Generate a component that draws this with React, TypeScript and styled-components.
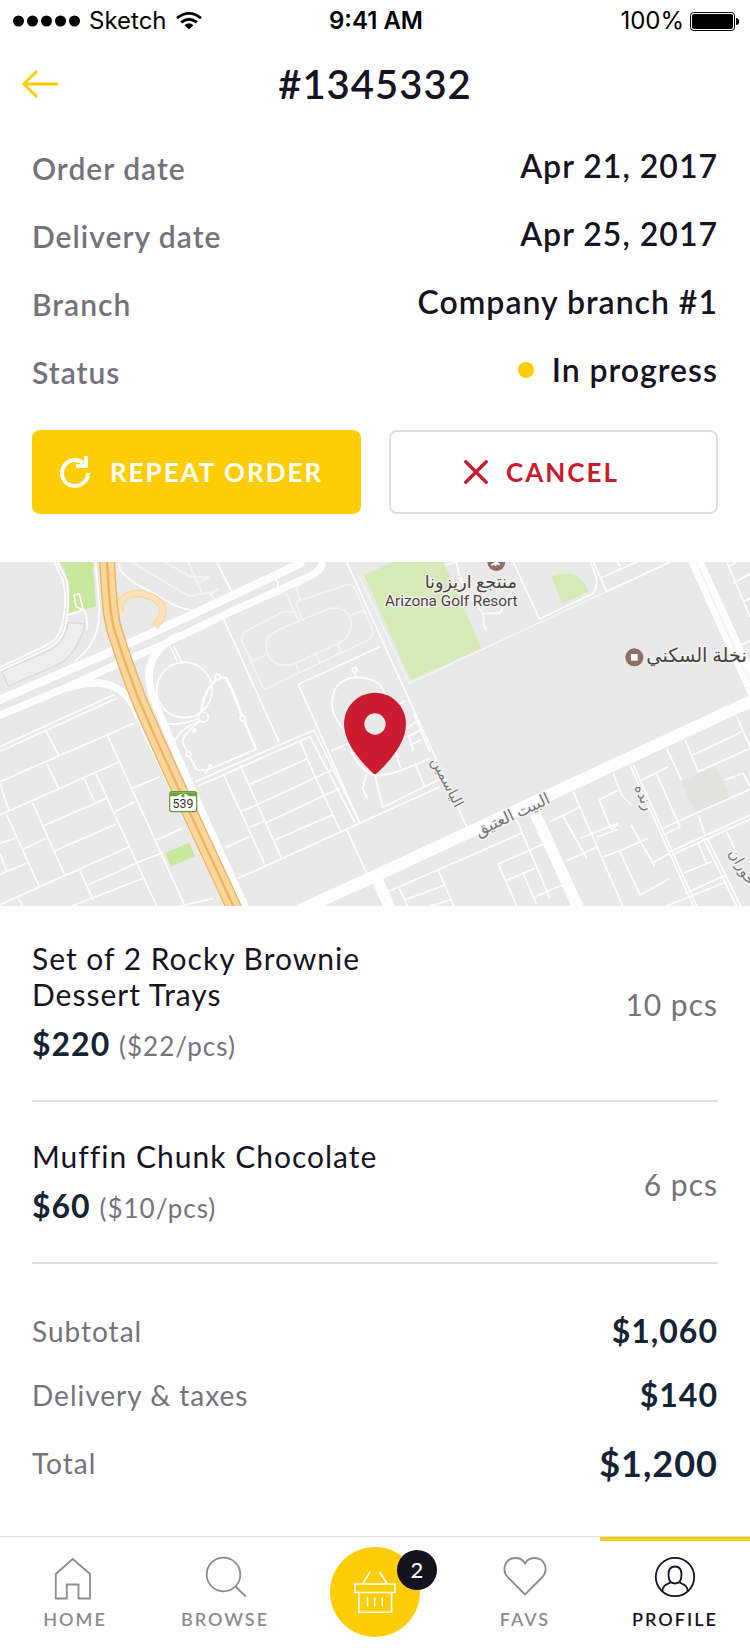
import React from 'react';
import styled, { createGlobalStyle } from 'styled-components';

const color = {
  ink: '#161323',
  price: '#152433',
  muted: '#74727c',
  tab: '#8c8b92',
  line: '#dedfe0',
  yellow: '#ffcd05',
  red: '#cb1b2f',
};

const GlobalStyle = createGlobalStyle`
  *, *::before, *::after { box-sizing: border-box; }
  body {
    margin: 0;
    background: #fff;
    color: ${color.ink};
    font-family: Lato, "Liberation Sans", sans-serif;
    letter-spacing: 1px;
  }
  h1, h2, p, dl, dd, ul { margin: 0; padding: 0; }
  ul { list-style: none; }
  svg { display: block; flex: none; overflow: visible; }
`;

const Screen = styled.div`
  min-height: 100vh;
  display: flex;
  flex-direction: column;
`;

const StatusBar = styled.div`
  display: grid;
  grid-template-columns: 1fr auto 1fr;
  align-items: center;
  height: 42px;
  padding: 0 11px 0 13px;
  color: #000;
  font: 400 24px/40px Inter, sans-serif;
  letter-spacing: 0;
`;

const StatusGroup = styled.div<{ $end?: boolean }>`
  display: flex;
  align-items: center;
  justify-content: ${(p) => (p.$end ? 'flex-end' : 'flex-start')};
  gap: ${(p) => (p.$end ? 6 : 9)}px;
`;

const Clock = styled.time`
  font-weight: 600;
`;

const Header = styled.header`
  display: grid;
  grid-template-columns: 1fr auto 1fr;
  align-items: center;
  height: 84px;
  padding: 0 22px;
`;

const BackButton = styled.button`
  justify-self: start;
  padding: 0;
  border: 0;
  background: none;
  color: ${color.yellow};
  cursor: pointer;
`;

const Title = styled.h1`
  font-size: 40px;
  line-height: 48px;
  font-weight: 600;
`;

const Details = styled.dl`
  display: flex;
  flex-direction: column;
  gap: 24px;
  padding: 20px 32px 0;
`;

const DetailRow = styled.div`
  display: flex;
  justify-content: space-between;
  align-items: flex-start;
`;

const DetailLabel = styled.dt`
  color: ${color.muted};
  font-size: 30px;
  line-height: 44px;
  font-weight: 600;
`;

const DetailValue = styled.dd`
  display: flex;
  align-items: center;
  gap: 18px;
  font-size: 32px;
  line-height: 40px;
  font-weight: 600;
`;

const StatusDot = styled.span`
  width: 16px;
  height: 16px;
  border-radius: 50%;
  background: ${color.yellow};
`;

const Actions = styled.div`
  display: grid;
  grid-template-columns: 1fr 1fr;
  gap: 28px;
  padding: 36px 32px 48px;
`;

const ActionButton = styled.button<{ $primary?: boolean }>`
  display: flex;
  align-items: center;
  justify-content: center;
  gap: ${(p) => (p.$primary ? 20 : 18)}px;
  height: 84px;
  padding: 0 ${(p) => (p.$primary ? 10 : 24)}px 0 0;
  border: 2px solid ${(p) => (p.$primary ? color.yellow : color.line)};
  border-radius: 8px;
  background: ${(p) => (p.$primary ? color.yellow : '#fff')};
  color: ${(p) => (p.$primary ? '#fff' : color.red)};
  font: 700 26px/32px Lato, sans-serif;
  letter-spacing: 2px;
  cursor: pointer;
`;

const MapPanel = styled.section`
  height: 344px;
  overflow: hidden;
  background: #e9e9e9;
  svg { width: 100%; height: 100%; }
`;

const ItemList = styled.ul`
  padding: 0 32px;
`;

const Item = styled.li`
  display: flex;
  align-items: center;
  justify-content: space-between;
  padding: 36px 0;
  border-bottom: 2px solid ${color.line};
  &:first-child { padding-top: 34px; }
`;

const ItemName = styled.h2`
  max-width: 360px;
  font-size: 30px;
  line-height: 36px;
  font-weight: 400;
`;

const ItemPrice = styled.p`
  margin-top: 12px;
  color: ${color.price};
  font-size: 32px;
  line-height: 40px;
  font-weight: 700;
`;

const UnitPrice = styled.span`
  color: ${color.muted};
  font-size: 26px;
  line-height: 26px;
  font-weight: 400;
`;

const Quantity = styled.p`
  padding-top: 4px;
  color: ${color.muted};
  font-size: 30px;
  line-height: 36px;
`;

const Totals = styled.dl`
  display: flex;
  flex-direction: column;
  gap: 24px;
  padding: 47px 32px 49px;
`;

const TotalRow = styled.div<{ $grand?: boolean }>`
  display: flex;
  align-items: center;
  justify-content: space-between;
  line-height: ${(p) => (p.$grand ? 48 : 40)}px;
  dt { color: ${color.muted}; font-size: 28px; }
  dd {
    color: ${color.price};
    font-size: ${(p) => (p.$grand ? 36 : 32)}px;
    font-weight: 700;
  }
`;

const TabBar = styled.nav`
  display: grid;
  grid-template-columns: repeat(5, 1fr);
  margin-top: auto;
  border-top: 1px solid ${color.line};
`;

const Tab = styled.a<{ $active?: boolean }>`
  display: flex;
  flex-direction: column;
  align-items: center;
  gap: 8px;
  padding: 16px 0 17px;
  border-top: 4px solid ${(p) => (p.$active ? color.yellow : 'transparent')};
  color: ${(p) => (p.$active ? color.ink : color.tab)};
  font-size: 18px;
  line-height: 24px;
  font-weight: 600;
  letter-spacing: 2px;
  text-decoration: none;
`;

const CartLink = styled.a`
  position: relative;
  display: flex;
  align-items: center;
  justify-content: center;
  justify-self: center;
  width: 90px;
  height: 90px;
  margin-top: 10px;
  border-radius: 50%;
  background: ${color.yellow};
  color: #fff;
`;

const CartBadge = styled.span`
  position: absolute;
  top: 3px;
  right: -17px;
  width: 40px;
  height: 40px;
  border-radius: 50%;
  background: #12131c;
  font-size: 22px;
  line-height: 40px;
  font-weight: 500;
  letter-spacing: 0;
  text-align: center;
`;

const SignalIcon = () => (
  <svg width="67" height="12" fill="currentColor" aria-hidden="true">
    {[0, 1, 2, 3, 4].map((i) => (
      <circle key={i} cx={5.5 + i * 14} cy="6" r="5.5" />
    ))}
  </svg>
);

const WifiIcon = () => (
  <svg width="26" height="18" viewBox="0 0 26 18" fill="none" stroke="currentColor" strokeWidth="2.8" aria-hidden="true">
    <path d="M1 6.2 Q13 -3.4 25 6.2" />
    <path d="M5.2 10.4 Q13 4 20.8 10.4" />
    <path d="M13 17.5 L8.6 13.2 Q13 9.4 17.4 13.2 Z" fill="currentColor" stroke="none" />
  </svg>
);

const BatteryIcon = () => (
  <svg width="49" height="19" viewBox="0 0 49 19" aria-hidden="true">
    <rect x=".5" y=".5" width="44" height="18" rx="3" fill="none" stroke="currentColor" />
    <rect x="2" y="2" width="41" height="15" rx="2" />
    <path d="M46 6 Q49 6 49 9.500 Q49 13 46 13 Z" />
  </svg>
);

const ArrowIcon = () => (
  <svg width="36" height="28" viewBox="0 0 36 28" fill="none" stroke="currentColor" strokeWidth="2.8" aria-hidden="true">
    <path d="M36 14 H1.500 M15 1 L1.800 14 L15 27" />
  </svg>
);

const RepeatIcon = () => (
  <svg width="30" height="32" viewBox="0 0 30 32" fill="none" stroke="currentColor" strokeWidth="4" aria-hidden="true">
    <path d="M28 17 A13 13 0 1 1 23.500 7.200" />
    <path d="M26 0 V10 H16" />
  </svg>
);

const CrossIcon = () => (
  <svg width="24" height="24" viewBox="0 0 24 24" fill="none" stroke="currentColor" strokeWidth="3.400" strokeLinecap="round" aria-hidden="true">
    <path d="M1.800 1.800 L22.200 22.200 M22.200 1.800 L1.800 22.200" />
  </svg>
);

const TabIcon = ({ children }: { children: React.ReactNode }) => (
  <svg width="42" height="42" viewBox="0 0 42 42" fill="none" stroke="currentColor" strokeWidth="1.800" aria-hidden="true">
    {children}
  </svg>
);

const tabs = {
  home: <path d="M18.700 2 L36 17 V41.500 H24.500 V27.500 H12.800 V41.500 H1.800 V17 Z" />,
  browse: <><circle cx="19.500" cy="17.500" r="16.800" /><path d="M31 29 L41.800 39.500" /></>,
  favs: <path d="M21 37.500 L4 20.500 C-3 13 1 1 11.500 1 C16 1 19 3 21 6.500 C23 3 26 1 30.500 1 C41 1 45 13 38 20.500 Z" />,
  profile: (
    <>
      <circle cx="21" cy="20" r="19.200" />
      <path d="M21 9.500 C25 9.500 27.500 12 27.500 17.500 C27.500 23.500 25.500 26.500 21 26.500 C16.500 26.500 14.500 23.500 14.500 17.500 C14.500 12 17 9.500 21 9.500 Z" />
      <path d="M16.500 25.500 C11 28 8.500 29 8.500 34.500 M25.500 25.500 C31 28 33.500 29 33.500 34.500" />
    </>
  ),
};

const BasketIcon = () => (
  <svg width="42" height="42" viewBox="0 0 42 42" fill="none" stroke="currentColor" strokeWidth="1.600" aria-hidden="true">
    <path d="M1 13 H41 V21.500 H1 Z M5 21.500 V41.200 H37.500 V21.500 M13.500 26.500 V35.500 M20.700 26.500 V35.500 M28.300 26.500 V35.500 M16 1 L9 12.500 M25.500 1 L33 12.500" />
  </svg>
);

const Marker = ({ x, y, children }: { x: number; y: number; children: React.ReactNode }) => (
  <g transform={`translate(${x} ${y})`}>
    <circle r="27" fill="#8f6e63" stroke="none" />
    {children}
  </g>
);

const DeliveryMap = () => (
  <svg viewBox="0 36 2250 1032" preserveAspectRatio="xMidYMid slice" role="img" aria-label="Delivery location" fill="none" stroke="#fff" strokeWidth="5">
    <rect y="36" width="2250" height="1032" fill="#e9e9e9" stroke="none" />

    {/* parks and buildings */}
    <g stroke="none">
      <path d="M180 36 H278 L288 170 L203 190 L207 100 L193 60 Z" fill="#c8e69d" />
      <path d="M495 908 L568 878 L585 918 L513 950 Z" fill="#c8e69d" />
      <path d="M1092 75 L1180 36 H1330 L1445 295 L1232 390 Z" fill="#d6eab8" />
      <path d="M1653 78 Q1740 50 1766 124 L1688 162 Z" fill="#d6eab8" />
      <path d="M2043 692 L2147 650 L2190 745 L2087 790 Z" fill="#e2e3dc" />
      <path d="M205 217 L255 222 C243 280 205 335 165 348 L25 408 L5 364 L150 300 C180 282 197 262 205 217 Z" fill="#eee" stroke="#d9d9d9" strokeWidth="4" />
    </g>

    {/* footpaths */}
    <g stroke="#f5f5f5">
      <path d="M395 36 L565 138 L645 125 M495 36 L570 80 L628 82 M565 36 L605 128 M590 100 L628 82 M632 128 L642 150 M655 115 L630 135" />
      <path d="M765 160 L845 130 Q862 130 865 145 L895 210 M905 205 L888 160 L900 150 L888 110 L910 98 M890 155 L1045 103 Q1060 103 1065 115 L1120 245 Q1118 262 1105 270 L800 415 Q790 418 787 410 L725 270 Q722 255 735 245 L850 185 L892 188" />
      <path d="M835 240 L980 178 C1040 160 1065 210 1050 240 Q1045 265 1015 280 L880 343 C820 355 795 320 798 280 Q803 255 835 240 Z M1052 195 L1092 182 M797 315 L758 332 M888 343 L900 370 M947 308 L960 338 M1013 283 L1025 310" />
      <path d="M1078 80 L1228 400 L2010 36" />
    </g>

    {/* side streets, west */}
    <path d="M163 36 L190 95 Q203 150 185 230 Q175 270 130 290 L0 352 M172 36 L200 90 Q212 165 195 235 Q180 280 140 298 L0 362 M286 36 L298 170 Q300 250 260 300 L225 335" />
    <path d="M205 195 L250 180 Q265 195 260 240 M222 135 L238 132 L250 180 L228 170 Z" />
    <path d="M0 590 L345 433 M0 604 L350 445 M0 695 L405 518 M0 795 L355 637 M138 543 L177 618 M140 640 L177 717 M0 700 L27 783 M322 555 L555 1068 M20 795 L118 1010 M97 757 L193 973 M130 828 L320 745 M165 902 L348 823 M70 897 L140 865 M0 973 L80 940 M0 880 L45 865 M0 910 L20 965 M0 1064 L388 890 M253 687 L282 753 M288 672 L470 1068 M240 963 L280 1050 M265 1005 L430 930 L490 908 M215 1068 L430 985 M55 1045 L68 1068 M398 715 L480 680 M345 785 L405 755 M470 870 L548 835 M540 1068 L640 1045" />
    <path d="M586 695 L942 540 L1080 820 M595 708 L930 560 L1065 818 M670 672 L795 945 M720 645 L843 922 M900 572 L945 680 L1020 840 M745 705 L925 625 M770 765 L995 660 M795 820 L1020 715 M825 870 L997 795 M720 785 L770 765 M748 832 L795 812 M675 893 L748 860 M715 985 L1320 710 M1040 838 L1100 970 M1080 820 L895 403 L1140 290 M993 603 L1045 580 M670 205 L838 578" />
    <path d="M1040 36 L1400 830 M650 36 L695 125" />
    <path d="M355 36 C362 92 430 110 470 135 C515 162 540 178 580 180" />
    <circle cx="553" cy="420" r="83" />
    <path d="M510 290 L535 340 M522 290 L547 340 M500 520 Q545 530 605 500 M525 572 Q545 530 610 510" />
    <path d="M652 380 L680 385 L728 505 L768 598 L622 660 Q590 665 585 650 L565 612 L548 578 Q548 550 600 515 L610 500" />
    <path d="M652 385 Q605 430 605 490 M675 380 L693 412 L728 500 L767 595" strokeWidth="8" />
    <circle cx="610" cy="501" r="15" fill="#e9e9e9" />
    <circle cx="653" cy="381" r="8" fill="#e9e9e9" />
    <circle cx="728" cy="505" r="8" fill="#e9e9e9" />
    <circle cx="565" cy="612" r="7" fill="#e9e9e9" />
    <path d="M583 535 V548 M630 642 V652" strokeWidth="10" />
    <path d="M630 650 L615 672" />
    <path d="M1060 590 L1000 490 C985 420 1020 383 1070 382 C1120 382 1145 400 1160 440 M1066 382 V365 M1045 580 Q1070 660 1125 677 Q1170 680 1290 625 M1100 672 L1088 715 L1102 747 M1125 677 L1148 772 L1315 690 M1275 712 L1245 640 M1240 490 L1290 605 M1220 535 L1250 515 M1225 560 L1260 540 M1230 585 L1265 570 M1225 555 L1240 600 M1180 580 L1202 655 M1195 465 L1215 452" />
    <circle cx="1064" cy="360" r="7" />

    {/* side streets, east */}
    <path d="M1540 36 L1618 207 L1770 135 Q1795 125 1788 80 L1772 36 M1780 36 L1820 125 L2010 36 M1800 85 L1910 36 M1850 36 L1862 50 M1335 45 L1370 36 Q1380 120 1450 190 H1500 L1530 130 M1450 190 L1452 225 L1460 243" />
    <path d="M2180 36 L2250 200 M2185 50 L2210 36 M2200 100 L2250 72 M2230 155 L2250 145 M2225 285 L2250 272" />
    <path d="M1550 810 L1650 1045 M1565 850 L1160 1027 M1635 880 L1495 942 L1550 1068 M1315 962 L1362 1068 M1198 1015 L1222 1068 M1215 1050 L1335 1005 M1290 1068 L1350 1050 M1515 993 L1605 955 M1570 972 L1610 1062 M1605 1040 L1700 1000" />
    <path d="M1720 725 L1868 1068 M1650 815 L1738 772 M1690 800 L1760 925 M1700 932 L1795 890 M1740 865 L1855 820 M1790 862 L1855 838 M1797 750 L1855 720 M1797 748 L1835 840 M1840 670 L1865 735 L1895 765 M1855 820 L1835 840 M1810 920 L1865 900 L1945 865 M1860 905 L1920 1035 L2010 985 M1893 825 L1965 950 M1955 940 L2010 910" />
    <path d="M1890 645 L2080 1068 M1900 645 L2090 1068 M1925 690 L2005 650 M1970 672 L2040 830 L1990 855 M2000 595 L2045 692 M2055 570 L2095 665 L2250 595 M2080 615 L2225 545 M2210 500 L2250 590 M1990 835 L2087 790 L2190 745 M2175 690 L2230 670 L2250 710 M2190 745 L2250 718" />
    <path d="M2010 905 L2250 795 M2015 915 L2250 808 M2110 865 L2210 1068 M2122 865 L2222 1068 M2095 795 L2115 855 M2050 970 L2135 935 M2055 1030 L2180 975 M2000 1068 L2180 995 M2180 845 L2210 910 M2095 880 L2120 940" />

    {/* avenues */}
    <g>
      <path d="M-20 458 L340 302 L580 192 L910 36" strokeWidth="25" />
      <path d="M-20 504 L200 412 L350 343 L480 288 L700 182 L930 78 Q970 60 966 30" strokeWidth="22" />
      <path d="M200 415 Q330 370 390 450 Q430 520 690 1080" strokeWidth="22" />
      <path d="M540 255 Q420 310 455 430 Q480 510 740 1080" strokeWidth="22" />
      <path d="M820 85 Q840 95 832 110" strokeWidth="6" />
      <path d="M900 1080 L1125 978 L2260 450" strokeWidth="36" />
      <path d="M1130 985 L1175 1085 M1605 790 L1738 1080" strokeWidth="34" />
      <path d="M2075 30 L2260 440" strokeWidth="24" />
      <path d="M2098 30 L2260 385" strokeWidth="20" />
      <path d="M2086 30 L2250 400" stroke="#e9e9e9" strokeWidth="2" />
    </g>

    {/* motorway */}
    <path d="M362 190 C350 130 410 125 440 135 C500 155 500 190 465 230" stroke="#fcd59b" strokeWidth="22" />
    <path d="M362 190 C350 130 410 125 440 135 C500 155 500 190 465 230" stroke="#fde3bd" strokeWidth="15" />
    {[
      { stroke: '#e3b36c', width: 48 },
      { stroke: '#fdd798', width: 40 },
      { stroke: '#e9b468', width: 7 },
    ].map((layer) => (
      <path key={layer.width} d="M320 20 C328 130 328 210 352 265 C362 300 372 330 405 418 C450 540 600 850 705 1080" stroke={layer.stroke} strokeWidth={layer.width} />
    ))}

    {/* route shield */}
    <rect x="509" y="725" width="81" height="60" rx="7" fill="#fff" stroke="#669c3a" strokeWidth="4" />
    <path d="M511 727 H588 V739 H568 Q549 722 530 739 H511 Z" fill="#67a436" stroke="none" />
    <circle cx="549" cy="737" r="5" fill="#67a436" stroke="none" />

    <Marker x={1489} y={36}>
      <path d="M-15 10 L12 -6 M-10 -4 L10 8 M-5 12 L2 4" />
    </Marker>
    <Marker x={1903} y={322}>
      <rect x="-10" y="-10" width="20" height="20" fill="#fff" stroke="none" />
    </Marker>

    {/* place names */}
    <g fill="#4a423e" stroke="#f4f4f2" strokeWidth="8" strokeLinejoin="round" paintOrder="stroke" letterSpacing="0" fontFamily="Roboto, 'DejaVu Sans', sans-serif">
      <text x="549" y="773" fontSize="37" textAnchor="middle" stroke="none" fill="#333">539</text>
      <text x="1274" y="114" fontSize="53">منتجع اريزونا</text>
      <text x="1155" y="168" fontSize="46">Arizona Golf Resort</text>
      <text x="1939" y="337" fontSize="58">نخلة السكني</text>
      <g fill="#777" fontSize="44" textAnchor="middle">
        <text transform="translate(1329 703) rotate(63)">الياسمين</text>
        <text transform="translate(1544 809) rotate(-25)" fontSize="49">البيت العتيق</text>
        <text transform="translate(1918 748) rotate(68)">رنده</text>
        <text transform="translate(2214 958) rotate(60)">حوران</text>
      </g>
    </g>

    {/* delivery pin */}
    <path d="M1125 428 C1073 428 1032 470 1032 522 C1032 580 1085 637 1119 670 Q1125 675 1131 670 C1165 637 1218 580 1218 522 C1218 470 1177 428 1125 428 Z" fill={color.red} stroke="none" />
    <circle cx="1125" cy="522" r="32" fill="#e9e9e9" stroke="none" />
  </svg>
);

const details = [
  { label: 'Order date', value: 'Apr 21, 2017' },
  { label: 'Delivery date', value: 'Apr 25, 2017' },
  { label: 'Branch', value: 'Company branch #1' },
  { label: 'Status', value: 'In progress', dot: true },
];

const items = [
  { name: 'Set of 2 Rocky Brownie Dessert Trays', price: '$220', unit: '($22/pcs)', quantity: '10 pcs' },
  { name: 'Muffin Chunk Chocolate', price: '$60', unit: '($10/pcs)', quantity: '6 pcs' },
];

export default function App() {
  return (
    <Screen>
      <GlobalStyle />
      <StatusBar>
        <StatusGroup>
          <SignalIcon />
          Sketch
          <WifiIcon />
        </StatusGroup>
        <Clock>9:41 AM</Clock>
        <StatusGroup $end>
          100%
          <BatteryIcon />
        </StatusGroup>
      </StatusBar>
      <Header>
        <BackButton type="button" aria-label="Back">
          <ArrowIcon />
        </BackButton>
        <Title>#1345332</Title>
      </Header>
      <main>
        <Details>
          {details.map((row) => (
            <DetailRow key={row.label}>
              <DetailLabel>{row.label}</DetailLabel>
              <DetailValue>
                {row.dot && <StatusDot />}
                {row.value}
              </DetailValue>
            </DetailRow>
          ))}
        </Details>
        <Actions>
          <ActionButton type="button" $primary>
            <RepeatIcon />
            REPEAT ORDER
          </ActionButton>
          <ActionButton type="button">
            <CrossIcon />
            CANCEL
          </ActionButton>
        </Actions>
        <MapPanel>
          <DeliveryMap />
        </MapPanel>
        <ItemList>
          {items.map((item) => (
            <Item key={item.name}>
              <div>
                <ItemName>{item.name}</ItemName>
                <ItemPrice>
                  {item.price} <UnitPrice>{item.unit}</UnitPrice>
                </ItemPrice>
              </div>
              <Quantity>{item.quantity}</Quantity>
            </Item>
          ))}
        </ItemList>
        <Totals>
          <TotalRow>
            <dt>Subtotal</dt>
            <dd>$1,060</dd>
          </TotalRow>
          <TotalRow>
            <dt>Delivery &amp; taxes</dt>
            <dd>$140</dd>
          </TotalRow>
          <TotalRow $grand>
            <dt>Total</dt>
            <dd>$1,200</dd>
          </TotalRow>
        </Totals>
      </main>
      <TabBar>
        <Tab href="#home">
          <TabIcon>{tabs.home}</TabIcon>
          HOME
        </Tab>
        <Tab href="#browse">
          <TabIcon>{tabs.browse}</TabIcon>
          BROWSE
        </Tab>
        <CartLink href="#cart" aria-label="Cart">
          <BasketIcon />
          <CartBadge>2</CartBadge>
        </CartLink>
        <Tab href="#favs">
          <TabIcon>{tabs.favs}</TabIcon>
          FAVS
        </Tab>
        <Tab href="#profile" $active aria-current="page">
          <TabIcon>{tabs.profile}</TabIcon>
          PROFILE
        </Tab>
      </TabBar>
    </Screen>
  );
}
